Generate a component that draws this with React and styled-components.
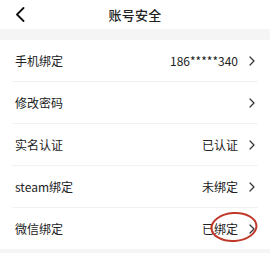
import React from 'react';
import styled, { createGlobalStyle } from 'styled-components';

const GlobalStyle = createGlobalStyle`
  html, body {
    margin: 0;
    padding: 0;
    background: #f5f5f5;
    font-family: "Noto Sans CJK SC", "Noto Sans", sans-serif;
  }
`

const Page = styled.div`
  width: 270px;
  height: 253px;
  background: #f5f5f5;
  overflow: hidden;
`

const Header = styled.div`
  position: relative;
  height: 29px;
  background: #fff;
  display: flex;
  align-items: center;
  justify-content: center;
`

const BackButton = styled.div`
  position: absolute;
  left: 15px;
  top: 6px;
  width: 12px;
  height: 16px;
  display: flex;
  align-items: center;
`

const Title = styled.div`
  font-size: 13px;
  font-weight: 500;
  color: #222;
  letter-spacing: 0.3px;
`

const List = styled.div`
  margin-top: 11px;
  background: #fff;
`

const Row = styled.div`
  position: relative;
  height: 41px;
  margin: 0 12px;
  padding: 0 3px;
  display: flex;
  align-items: center;
  justify-content: space-between;
  border-bottom: ${(props) => (props.last ? "none" : "1px solid #f2f2f2")};
`

const Label = styled.div`
  font-size: 12px;
  color: #222;
`

const Right = styled.div`
  display: flex;
  align-items: center;
  gap: 11px;
`

const Value = styled.div`
  font-size: 12px;
  color: #222;
`

const Mark = styled.svg`
  position: absolute;
  left: 197px;
  top: 2px;
  pointer-events: none;
`

const Chevron = () => (
  <svg width="6" height="10" viewBox="0 0 6 10">
    <path d="M1 1 L5 5 L1 9" fill="none" stroke="#333" strokeWidth="1.2" strokeLinecap="round" strokeLinejoin="round" />
  </svg>
)

const items = [
  { label: "手机绑定", value: "186*****340" },
  { label: "修改密码", value: "" },
  { label: "实名认证", value: "已认证" },
  { label: "steam绑定", value: "未绑定" },
  { label: "微信绑定", value: "已绑定", marked: true },
]

const App = () => {
  return (
    <>
      <GlobalStyle />
      <Page>
        <Header>
          <BackButton>
            <svg width="10" height="15" viewBox="0 0 10 15">
              <path d="M8.5 1 L2 7.5 L8.5 14" fill="none" stroke="#111" strokeWidth="1.8" strokeLinecap="round" strokeLinejoin="round" />
            </svg>
          </BackButton>
          <Title>账号安全</Title>
        </Header>
        <List>
          {items.map((item, i) => (
            <Row key={item.label} last={i === items.length - 1}>
              <Label>{item.label}</Label>
              <Right>
                {item.value && <Value>{item.value}</Value>}
                <Chevron />
              </Right>
              {item.marked && (
                <Mark width="50" height="34" viewBox="0 0 50 34">
                  <ellipse cx="25" cy="17" rx="22.5" ry="14" fill="none" stroke="#c0392b" strokeWidth="2" transform="rotate(-4 25 17)" />
                </Mark>
              )}
            </Row>
          ))}
        </List>
      </Page>
    </>
  )
}

export default App;
